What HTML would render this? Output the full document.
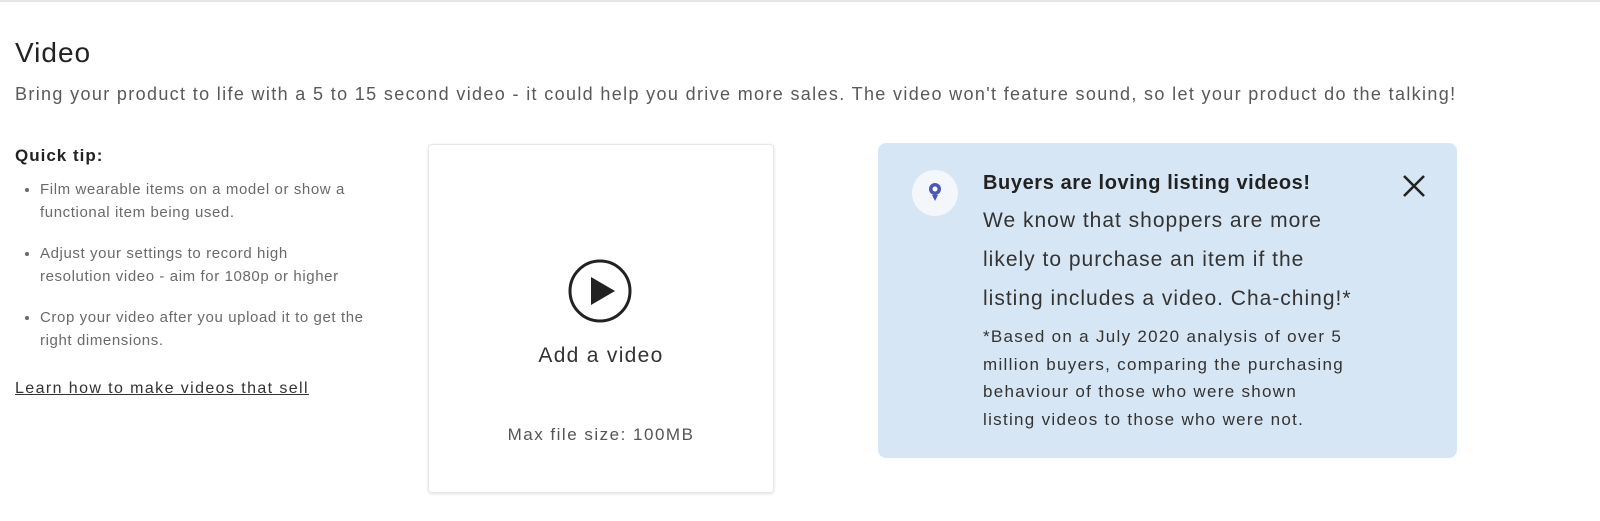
<!DOCTYPE html>
<html><head><style>
body{margin:0;width:1600px;height:521px;background:#fff;font-family:"Liberation Sans",sans-serif;position:relative;overflow:hidden;color:#222}
.top{position:absolute;left:0;top:0;width:1600px;height:2px;background:#e6e6e6}
.a{position:absolute;white-space:nowrap}
h1{position:absolute;left:15px;top:37px;margin:0;font-size:28px;font-weight:normal;color:#222;letter-spacing:1px}
.sub{left:15px;top:84px;font-size:18px;color:#595959;letter-spacing:1.35px}
.qt{left:15px;top:146px;font-size:17px;font-weight:bold;color:#222;letter-spacing:1px}
ul{position:absolute;left:20px;top:178px;margin:0;padding-left:20px;font-size:15px;color:#6a6a6a;line-height:23px;letter-spacing:.6px}
li{margin-bottom:18px;white-space:nowrap}
.learn{left:15px;top:380px;font-size:16px;color:#333;text-decoration:underline;letter-spacing:1.4px}
.card{position:absolute;left:428px;top:144px;width:344px;height:347px;border:1px solid #e8e8e8;border-radius:4px;box-shadow:0 1px 3px rgba(0,0,0,.12);background:#fff}
.info{position:absolute;left:878px;top:143px;width:579px;height:315px;background:#d7e6f5;border-radius:8px}
</style></head><body>
<div class="top"></div>
<h1>Video</h1>
<div class="a sub">Bring your product to life with a 5 to 15 second video - it could help you drive more sales. The video won't feature sound, so let your product do the talking!</div>
<div class="a qt">Quick tip:</div>
<ul>
<li>Film wearable items on a model or show a<br>functional item being used.</li>
<li>Adjust your settings to record high<br>resolution video - aim for 1080p or higher</li>
<li>Crop your video after you upload it to get the<br>right dimensions.</li>
</ul>
<div class="a learn">Learn how to make videos that sell</div>
<div class="card">
<svg style="position:absolute;left:138px;top:113px" width="66" height="66" viewBox="0 0 66 66"><circle cx="33" cy="33" r="30" fill="none" stroke="#222" stroke-width="3"/><path d="M24 19 L48 33 L24 47 Z" fill="#222"/></svg>
<div class="a" style="left:0;width:344px;text-align:center;top:199px;font-size:21px;color:#333;letter-spacing:1.3px">Add a video</div>
<div class="a" style="left:0;width:344px;text-align:center;top:280px;font-size:17px;color:#555;letter-spacing:1.5px">Max file size: 100MB</div>
</div>
<div class="info">
<div style="position:absolute;left:34px;top:27px;width:46px;height:46px;border-radius:50%;background:#f3f6fa"></div>
<svg style="position:absolute;left:50px;top:39px" width="14" height="22" viewBox="0 0 14 22"><circle cx="7" cy="7" r="6" fill="#4b57b8"/><circle cx="7" cy="7" r="2.5" fill="#fff"/><path d="M4 13h6l-3 6z" fill="#4b57b8"/></svg>
<div class="a" style="left:105px;top:29px;font-size:20px;font-weight:bold;color:#222;letter-spacing:.6px">Buyers are loving listing videos!</div>
<div class="a" style="left:105px;top:58px;font-size:21px;line-height:39px;color:#333;letter-spacing:1px">We know that shoppers are more<br>likely to purchase an item if the<br>listing includes a video. Cha-ching!*</div>
<div class="a" style="left:105px;top:180px;font-size:17px;line-height:27.5px;color:#333;letter-spacing:1.3px">*Based on a July 2020 analysis of over 5<br>million buyers, comparing the purchasing<br>behaviour of those who were shown<br>listing videos to those who were not.</div>
<svg style="position:absolute;left:524px;top:31px" width="24" height="24" viewBox="0 0 24 24"><path d="M2 2L22 22M22 2L2 22" stroke="#222" stroke-width="2.6"/></svg>
</div>
</body></html>
